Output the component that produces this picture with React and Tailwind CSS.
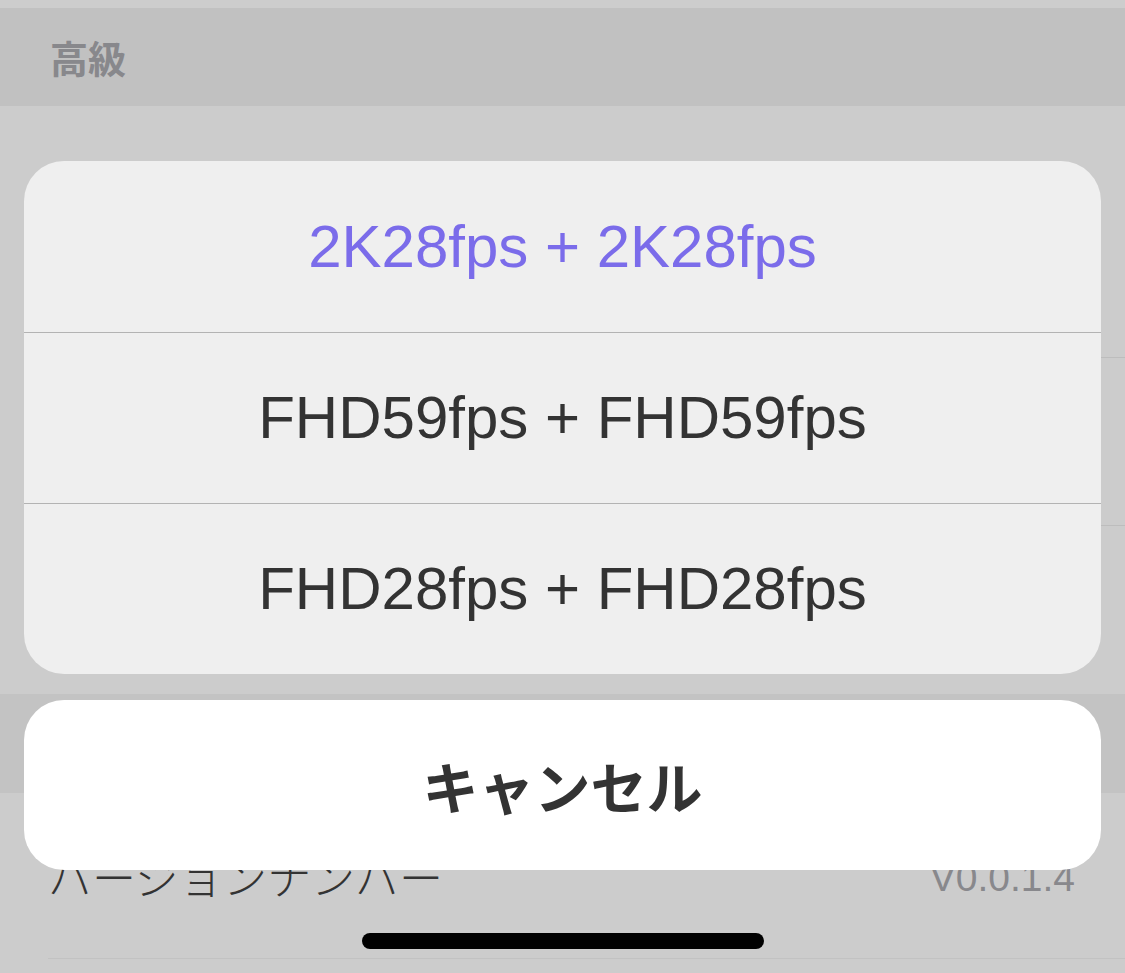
const options = [
  { label: '2K28fps + 2K28fps', selected: true },
  { label: 'FHD59fps + FHD59fps', selected: false },
  { label: 'FHD28fps + FHD28fps', selected: false },
];

const latin = { fontFamily: '"Liberation Sans", Arial, sans-serif' };
const jp = { fontFamily: '"Noto Sans CJK JP", "Noto Sans", sans-serif' };

function SettingsBackdrop() {
  // dimmed settings page sitting behind the action sheet
  return (
    <div className="flex flex-col">
      <div className="h-[8px] bg-[#cdcdcd]" />
      <div className="flex h-[98px] items-center bg-[#c1c1c1] px-[50px]">
        <span className="text-[38px] font-bold leading-none text-[#88888c]" style={jp}>
          高級
        </span>
      </div>
      <div className="ml-[48px] h-[252px] border-b border-[#bdbdbd]" />
      <div className="ml-[48px] h-[168px] border-b border-[#bdbdbd]" />
      <div className="h-[168px]" />
      <div className="h-[99px] bg-[#c3c3c3]" />
      <div className="ml-[48px] flex h-[166px] items-center justify-between border-b border-[#c2c2c2] pr-[50px]">
        <span className="text-[44px] font-light leading-none text-[#333333]" style={jp}>
          バージョンナンバー
        </span>
        <span className="pt-[4px] text-[39px] leading-none text-[#88888c]" style={latin}>
          V0.0.1.4
        </span>
      </div>
    </div>
  );
}

function ActionSheet() {
  return (
    <div className="absolute inset-0 flex flex-col px-[24px] pt-[161px]">
      <div className="flex flex-col overflow-hidden rounded-[40px] bg-[#efefef]">
        {options.map((o, i) => (
          <div
            key={o.label}
            className={
              'flex h-[171px] items-center justify-center ' +
              (i > 0 ? 'border-t border-[#b3b3b3]' : '')
            }
          >
            <span
              className={
                'text-[60px] leading-none ' + (o.selected ? 'text-[#7b6cea]' : 'text-[#333333]')
              }
              style={latin}
            >
              {o.label}
            </span>
          </div>
        ))}
      </div>
      <div className="mt-[26px] flex h-[170px] items-center justify-center rounded-[40px] bg-white">
        <span className="text-[56px] font-bold leading-none text-[#333333]" style={jp}>
          キャンセル
        </span>
      </div>
    </div>
  );
}

export default function App() {
  return (
    <div className="relative h-[973px] w-full overflow-hidden bg-[#cccccc]">
      <SettingsBackdrop />
      <ActionSheet />
      <div className="absolute left-[362px] top-[933px] h-[16px] w-[402px] rounded-full bg-black" />
    </div>
  );
}
